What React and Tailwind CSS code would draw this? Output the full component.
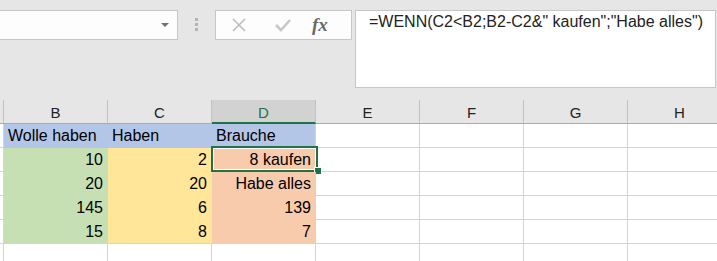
import React from 'react';

const cols = ['B', 'C', 'D', 'E', 'F', 'G', 'H'];

// cell fill per column index for rows 1..5
const fills = {
  header: 'bg-[#b4c6e7] border-[#b4c6e7]',
  B: 'bg-[#c6e0b4] border-[#c6e0b4]',
  C: 'bg-[#ffe699] border-[#ffe699]',
  D: 'bg-[#f8cbad] border-[#f8cbad]',
};

const rows = [
  { header: true, cells: ['Wolle haben', 'Haben', 'Brauche'] },
  { cells: ['10', '2', '8 kaufen'] },
  { cells: ['20', '20', 'Habe alles'] },
  { cells: ['145', '6', '139'] },
  { cells: ['15', '8', '7'] },
  { empty: true },
];

function Cell({ fill, text, align, lastFilled, children }) {
  return (
    <div
      className={`relative w-[104px] h-[24px] shrink-0 border-r border-b px-[4px] leading-[24px] text-[16px] text-black whitespace-nowrap ${
        fill ? fill : 'border-[#d4d4d4]'
      } ${lastFilled ? 'border-r-[#d4d4d4]' : ''} ${align === 'right' ? 'text-right' : 'text-left'}`}
    >
      {text}
      {children}
    </div>
  );
}

export default function App() {
  return (
    <div className="w-[717px] h-[261px] overflow-hidden bg-[#e6e6e6] font-['Liberation_Sans',Arial,sans-serif]">
      {/* formula bar */}
      <div className="h-[100px] flex items-start pt-[10px]">
        <div className="w-[178px] h-[30px] shrink-0 bg-[#fdfdfd] border-y border-r border-[#c6c6c6] flex items-center justify-end pr-[8px]">
          <svg width="8" height="5" viewBox="0 0 8 5">
            <path d="M0 0 L8 0 L4 4 Z" fill="#707070" />
          </svg>
        </div>
        <div className="ml-[17px] mt-[8px] flex flex-col gap-[2px]">
          <span className="block w-[3px] h-[3px] bg-[#b4b4b4]" />
          <span className="block w-[3px] h-[3px] bg-[#b4b4b4]" />
          <span className="block w-[3px] h-[3px] bg-[#b4b4b4]" />
        </div>
        <div className="ml-[17px] w-[137px] h-[30px] shrink-0 bg-[#fdfdfd] border border-[#c6c6c6] flex items-center">
          <svg className="ml-[15px]" width="16" height="14" viewBox="0 0 16 14">
            <path d="M2 1 L14 13 M14 1 L2 13" stroke="#bdbdbd" strokeWidth="1.6" fill="none" />
          </svg>
          <svg className="ml-[28px]" width="16" height="14" viewBox="0 0 16 14">
            <path d="M1 7 L6 12 L15 2" stroke="#c8c8c8" strokeWidth="2.6" fill="none" />
          </svg>
          <span className="ml-[21px] font-['Liberation_Serif',serif] italic font-bold text-[19px] leading-none text-[#6a6a6a] -mt-[2px]">
            fx
          </span>
        </div>
        <div className="ml-[3px] w-[361px] h-[78px] shrink-0 bg-white border border-[#c6c6c6] pl-[13px] pt-[1px]">
          <div className="text-[16px] leading-[20px] text-[#222] whitespace-nowrap">
            =WENN(C2&lt;B2;B2-C2&amp;" kaufen";"Habe alles")
          </div>
        </div>
      </div>

      {/* column headers */}
      <div className="flex h-[24px]">
        <div className="w-[4px] h-[24px] shrink-0 border-r border-b border-r-[#c2c2c2] border-b-[#ababab]" />
        {cols.map((c) =>
          c === 'D' ? (
            <div
              key={c}
              className="w-[104px] h-[24px] shrink-0 bg-[#d2d2d2] border-r border-r-[#c2c2c2] border-b-2 border-b-[#217346] text-center text-[15px] leading-[23px] pt-[1px] text-[#217346]"
            >
              {c}
            </div>
          ) : (
            <div
              key={c}
              className="w-[104px] h-[24px] shrink-0 border-r border-b border-r-[#c2c2c2] border-b-[#ababab] text-center text-[15px] leading-[23px] pt-[1px] text-[#222]"
            >
              {c}
            </div>
          )
        )}
      </div>

      {/* rows */}
      {rows.map((r, i) => (
        <div key={i} className="flex h-[24px]">
          <div className="w-[4px] h-[24px] shrink-0 bg-white border-r border-b border-[#d4d4d4]" />
          {cols.map((c, j) => {
            if (r.empty || j > 2) {
              return <div key={c} className="w-[104px] h-[24px] shrink-0 bg-white border-r border-b border-[#d4d4d4]" />;
            }
            const fill = r.header ? fills.header : fills[c];
            const align = r.header ? 'left' : 'right';
            const isSel = i === 1 && c === 'D';
            return (
              <Cell
                key={c}
                fill={`${fill} ${i === 4 ? 'border-b-[#d4d4d4]' : ''}`}
                text={r.cells[j]}
                align={align}
                lastFilled={j === 2}
              >
                {isSel && (
                  <div className="absolute left-[-1px] top-[-2px] w-[107px] h-[26px] border-2 border-[#217346]">
                    <div className="w-full h-full border border-white" />
                    <div className="absolute left-[101px] top-[19px] w-[8px] h-[8px] bg-[#217346] border border-white" />
                  </div>
                )}
              </Cell>
            );
          })}
        </div>
      ))}
    </div>
  );
}
